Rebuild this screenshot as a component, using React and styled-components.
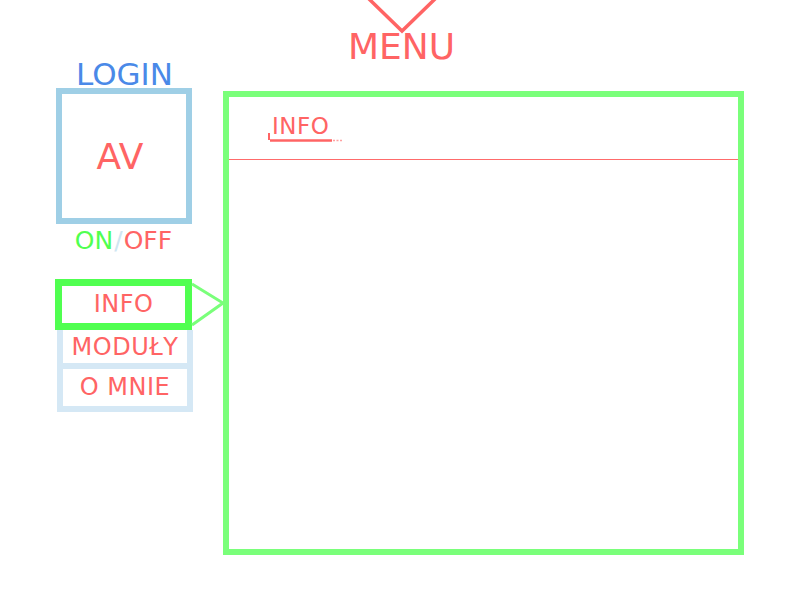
import React from 'react'
import styled, { createGlobalStyle } from 'styled-components'

const red = '#ff6464'

const GlobalStyle = createGlobalStyle`
  body {
    margin: 0;
    background: #ffffff;
    font-family: "DejaVu Sans", Verdana, sans-serif;
  }
`

const Page = styled.div`
  width: 800px;
  height: 600px;
  overflow: hidden;
`

const Header = styled.header`
  display: flex;
  flex-direction: column;
  align-items: center;
  padding-left: 3px;

  svg {
    display: block;
    overflow: visible;
  }
`

const MenuTitle = styled.h1`
  margin: 0;
  font-size: 36px;
  line-height: 28px;
  font-weight: normal;
  color: ${red};
`

const Main = styled.main`
  display: flex;
  align-items: flex-start;
  gap: 30px;
  padding-left: 56px;
`

const Side = styled.aside`
  width: 137px;
  display: flex;
  flex-direction: column;
`

const LoginLabel = styled.div`
  font-size: 31px;
  line-height: 27px;
  text-align: center;
  color: #4a89e8;
`

const Avatar = styled.div`
  box-sizing: border-box;
  width: 136px;
  height: 136px;
  border: 6px solid #9fcfe6;
  display: flex;
  align-items: center;
  justify-content: center;
  padding-right: 8px;
  font-size: 36px;
  color: ${red};
`

const Toggle = styled.div`
  margin-top: 2px;
  font-size: 25px;
  line-height: 30px;
  text-align: center;
  padding-right: 2px;
`

const Part = styled.span`
  color: ${p => p.$color};
  margin: 0 ${p => p.$gap || 0}px;
`

const Nav = styled.nav`
  margin-top: 23px;
  display: flex;
  flex-direction: column;
`

const NavItem = styled.div`
  position: relative;
  box-sizing: border-box;
  text-align: center;
  font-size: 24px;
  letter-spacing: 0.5px;
  color: ${red};
  ${p => p.$active ? `
    width: 137px;
    margin-left: -1px;
    height: 51px;
    line-height: 37px;
    border: 7px solid #50ff50;
  ` : `
    width: 136px;
    margin-left: 1px;
    border: 6px solid #d5e8f5;
    border-top: none;
    height: ${p.$h}px;
    line-height: ${p.$h - 6}px;
    padding-top: ${p.$pt}px;
  `}
`

const Pointer = styled.svg`
  position: absolute;
  left: calc(100% + 5px);
  top: -7px;
  overflow: visible;
`

const Panel = styled.section`
  box-sizing: border-box;
  margin-top: 30px;
  width: 521px;
  height: 464px;
  border: 6px solid #7aff7a;
`

const PanelHead = styled.div`
  padding: 17px 0 21px 43px;
  border-bottom: 1px solid #ff6b6b;
`

const PanelTitle = styled.h2`
  position: relative;
  display: inline-block;
  margin: 0;
  font-size: 23px;
  line-height: 24px;
  letter-spacing: 0.5px;
  font-weight: normal;
  color: ${red};

  svg {
    position: absolute;
    left: -5px;
    top: 17px;
    overflow: visible;
  }
`

export default function App() {
  return (
    <Page>
      <GlobalStyle />
      <Header>
        <svg width="70" height="33">
          <polyline points="1,-2 35,31 69,-2" fill="none" stroke={red} strokeWidth="3.5" />
        </svg>
        <MenuTitle>MENU</MenuTitle>
      </Header>
      <Main>
        <Side>
          <LoginLabel>LOGIN</LoginLabel>
          <Avatar>AV</Avatar>
          <Toggle>
            <Part $color="#50ff50">ON</Part>
            <Part $color="#cfe6f2" $gap={1}>/</Part>
            <Part $color={red}>OFF</Part>
          </Toggle>
          <Nav>
            <NavItem $active>
              INFO
              <Pointer width="36" height="51">
                <polyline points="2,5 33,24 2,46" fill="none" stroke="#7aff7a" strokeWidth="3" />
              </Pointer>
            </NavItem>
            <NavItem $h={39} $pt={1}>MODUŁY</NavItem>
            <NavItem $h={43} $pt={0}>O MNIE</NavItem>
          </Nav>
        </Side>
        <Panel>
          <PanelHead>
            <PanelTitle>
              INFO
              <svg width="80" height="12">
                <path d="M2 2 L2 9" stroke={red} strokeWidth="2" />
                <path d="M3 9.5 L65 9.5" stroke={red} strokeWidth="2.5" />
                <path d="M66 9.5 L76 9.5" stroke={red} strokeWidth="1.5" strokeDasharray="2 1.5" opacity="0.6" />
              </svg>
            </PanelTitle>
          </PanelHead>
        </Panel>
      </Main>
    </Page>
  )
}
